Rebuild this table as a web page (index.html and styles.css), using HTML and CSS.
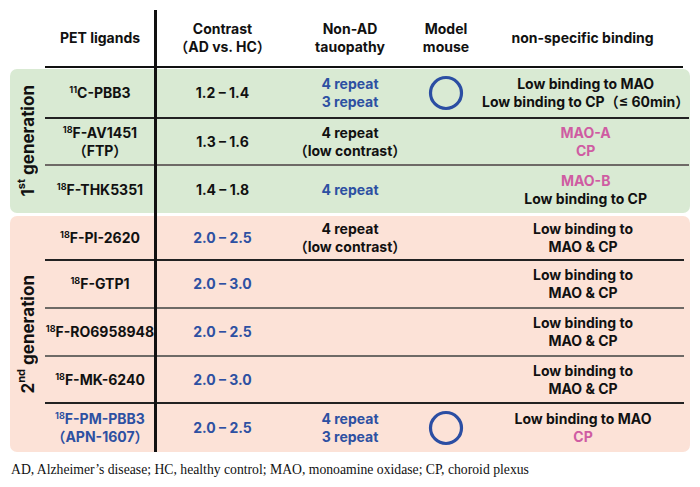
FILE: index.html
```html
<!DOCTYPE html>
<html lang="en">
<head>
<meta charset="utf-8">
<title>Tau PET ligands</title>
<link rel="stylesheet" href="styles.css">
</head>
<body>
<div class="sheet">
  <div class="table">
    <div class="head">
      <div class="cell"><span class="ln">PET ligands</span></div>
      <div class="cell"><span class="ln">Contrast</span><span class="ln">（AD vs. HC）</span></div>
      <div class="cell"><span class="ln">Non-AD</span><span class="ln">tauopathy</span></div>
      <div class="cell"><span class="ln">Model</span><span class="ln">mouse</span></div>
      <div class="cell"><span class="ln">non-specific binding</span></div>
    </div>

    <div class="group green">
      <div class="gen"><span class="gen-text">1<sup>st</sup> generation</span></div>
      <div class="rows">
        <div class="row h50 sep-dark">
          <div class="cell"><span class="ln"><sup class="iso">11</sup>C-PBB3</span></div>
          <div class="cell"><span class="ln">1.2 – 1.4</span></div>
          <div class="cell blue"><span class="ln">4 repeat</span><span class="ln">3 repeat</span></div>
          <div class="cell"><svg class="ring" viewBox="0 0 36 36" width="36" height="36"><circle cx="18" cy="18" r="15.5" fill="none" stroke="#2b4ea3" stroke-width="3.2"/></svg></div>
          <div class="cell"><span class="ln">Low binding to MAO</span><span class="ln">Low binding to CP（≤ 60min）</span></div>
        </div>
        <div class="row h47 sep-gray">
          <div class="cell"><span class="ln"><sup class="iso">18</sup>F-AV1451</span><span class="ln">（FTP）</span></div>
          <div class="cell"><span class="ln">1.3 – 1.6</span></div>
          <div class="cell"><span class="ln">4 repeat</span><span class="ln">（low contrast）</span></div>
          <div class="cell"></div>
          <div class="cell pink"><span class="ln">MAO-A</span><span class="ln">CP</span></div>
        </div>
        <div class="row h47">
          <div class="cell"><span class="ln"><sup class="iso">18</sup>F-THK5351</span></div>
          <div class="cell"><span class="ln">1.4 – 1.8</span></div>
          <div class="cell blue"><span class="ln">4 repeat</span></div>
          <div class="cell"></div>
          <div class="cell"><span class="ln pink">MAO-B</span><span class="ln">Low binding to CP</span></div>
        </div>
      </div>
    </div>

    <div class="group salmon">
      <div class="gen"><span class="gen-text">2<sup>nd</sup> generation</span></div>
      <div class="rows">
        <div class="row h45 sep-dark">
          <div class="cell"><span class="ln"><sup class="iso">18</sup>F-PI-2620</span></div>
          <div class="cell blue"><span class="ln">2.0 – 2.5</span></div>
          <div class="cell"><span class="ln">4 repeat</span><span class="ln">（low contrast）</span></div>
          <div class="cell"></div>
          <div class="cell"><span class="ln">Low binding to</span><span class="ln">MAO &amp; CP</span></div>
        </div>
        <div class="row h48 sep-gray">
          <div class="cell"><span class="ln"><sup class="iso">18</sup>F-GTP1</span></div>
          <div class="cell blue"><span class="ln">2.0 – 3.0</span></div>
          <div class="cell"></div>
          <div class="cell"></div>
          <div class="cell"><span class="ln">Low binding to</span><span class="ln">MAO &amp; CP</span></div>
        </div>
        <div class="row h48 sep-gray">
          <div class="cell"><span class="ln"><sup class="iso">18</sup>F-RO6958948</span></div>
          <div class="cell blue"><span class="ln">2.0 – 2.5</span></div>
          <div class="cell"></div>
          <div class="cell"></div>
          <div class="cell"><span class="ln">Low binding to</span><span class="ln">MAO &amp; CP</span></div>
        </div>
        <div class="row h47 sep-dark">
          <div class="cell"><span class="ln"><sup class="iso">18</sup>F-MK-6240</span></div>
          <div class="cell blue"><span class="ln">2.0 – 3.0</span></div>
          <div class="cell"></div>
          <div class="cell"></div>
          <div class="cell"><span class="ln">Low binding to</span><span class="ln">MAO &amp; CP</span></div>
        </div>
        <div class="row h48">
          <div class="cell blue"><span class="ln"><sup class="iso">18</sup>F-PM-PBB3</span><span class="ln">（APN-1607）</span></div>
          <div class="cell blue"><span class="ln">2.0 – 2.5</span></div>
          <div class="cell blue"><span class="ln">4 repeat</span><span class="ln">3 repeat</span></div>
          <div class="cell"><svg class="ring" viewBox="0 0 36 36" width="36" height="36"><circle cx="18" cy="18" r="15.5" fill="none" stroke="#2b4ea3" stroke-width="3.2"/></svg></div>
          <div class="cell"><span class="ln">Low binding to MAO</span><span class="ln pink">CP</span></div>
        </div>
      </div>
    </div>
  </div>
  <p class="note">AD, Alzheimer’s disease; HC, healthy control; MAO, monoamine oxidase; CP, choroid plexus</p>
</div>
</body>
</html>
```

FILE: styles.css
```css
* { box-sizing: border-box; }

html, body {
  margin: 0;
  padding: 0;
  background: #ffffff;
}

.sheet {
  width: 700px;
  padding: 10px 10px 0 10px;
  font-family: Inter, "Noto Sans CJK JP", sans-serif;
  font-weight: 700;
  font-size: 14px;
  line-height: 18px;
  color: #111111;
}

.table {
  position: relative;
}

.table::after {
  content: "";
  position: absolute;
  left: 144px;
  top: 0;
  bottom: 0;
  width: 3px;
  background: #111111;
}

.head,
.row {
  display: grid;
  grid-template-columns: 110px 135px 120px 72px 1fr;
}

.head {
  height: 58px;
  margin: 0 7px 0 35px;
  border-bottom: 2px solid #111111;
}

.cell {
  display: flex;
  flex-direction: column;
  align-items: center;
  justify-content: center;
  text-align: center;
  white-space: nowrap;
}

.ln {
  display: block;
  height: 18px;
  line-height: 18px;
}

.group {
  display: flex;
  border-radius: 7px;
  padding-right: 6px;
}

.green {
  margin-top: 1px;
  background: #d9ead3;
}

.salmon {
  margin-top: 3px;
  background: #fce2d7;
}

.gen {
  width: 35px;
  flex: none;
  display: flex;
  align-items: center;
  justify-content: center;
}

.gen-text {
  writing-mode: vertical-rl;
  transform: rotate(180deg);
  font-size: 17px;
  line-height: 22px;
  white-space: nowrap;
}

.gen-text sup {
  font-size: 11px;
  line-height: 0;
}

.rows {
  flex: 1;
}

.h45 { height: 45px; }
.h47 { height: 47px; }
.h48 { height: 48px; }
.h50 { height: 50px; }

.sep-dark { border-bottom: 2px solid #222222; }
.sep-gray { border-bottom: 2px solid #6e6a66; }

.iso {
  font-size: 9px;
  line-height: 0;
  vertical-align: 5px;
}

.blue { color: #2d50a2; }
.pink { color: #cf5ca2; }

.ring { display: block; }

.note {
  margin: 10px 0 0 1px;
  font-family: "Liberation Serif", "Times New Roman", serif;
  font-weight: 400;
  font-size: 13.7px;
  line-height: 16px;
  color: #111111;
}
```
